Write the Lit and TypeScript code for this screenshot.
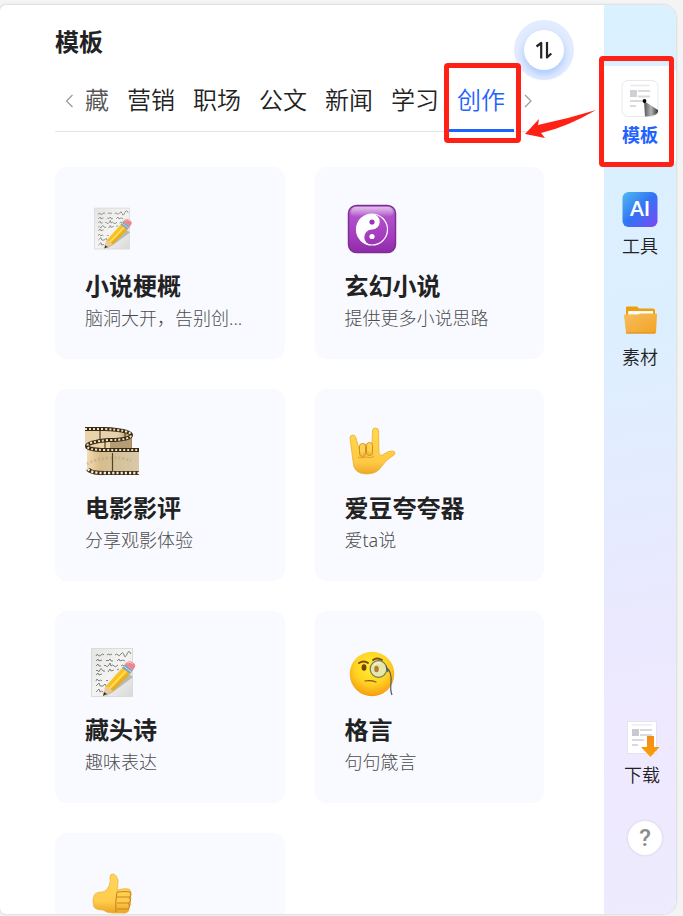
import { LitElement, html, css, nothing, TemplateResult } from "lit";
import { customElement, state } from "lit/decorators.js";
import { classMap } from "lit/directives/class-map.js";

const memo = html`<svg viewBox="0 0 54 54" aria-hidden="true">
  <defs>
    <linearGradient id="memo-paper" x1="0" y1="0" x2="1" y2="1"><stop stop-color="#e4e4e2" /><stop offset=".5" stop-color="#f4f4f2" /><stop offset="1" stop-color="#d9d9d9" /></linearGradient>
    <linearGradient id="memo-pencil" x1="0" y1="0" x2="1" y2="1"><stop stop-color="#ffe04a" /><stop offset=".5" stop-color="#f6bd1c" /><stop offset="1" stop-color="#b97708" /></linearGradient>
  </defs>
  <rect x="6.500" y="2.500" width="41" height="48" fill="url(#memo-paper)" stroke="#d9dbdd" />
  <g fill="none" stroke="#666" stroke-width=".8">
    <path d="M11 10q1-3 2-1t3 0 3 0m3 0q1-2 3 0l2-1m3 1q2-2 3 0t3-1 3 1 3-1 4 0" />
    <path d="M11 15l2-2 1 2 3-1m4 1q1-2 2 0l2-2 1 2h2m4 0l2-2 1 2 3-1 2 1" />
    <path d="M11 20l2-2 1 2h2m3 0q1-2 2 0t3-1l1-2 1 3q2-2 3 0t4-1m3 1q1-2 3 0" />
    <path d="M11 25q1-2 2 0t2-1 3 1h2m3 1l2-3 1 2 3-1m3 0l2-1" />
    <path d="M11 29l2-2 1 2 3-1m-6 7l1-2 2 2q2-2 3 0m4 0q1-2 2 0" />
    <path d="M11 40l3-3 1 3h3l2-2 1 2m-10 6l3-3 1 3q2-2 3 0" />
  </g>
  <path d="M20 47l20-22 8 6-20 15-7 4z" fill="#000" opacity=".2" />
  <path d="M20 41L37 22l8 6-17 17z" fill="url(#memo-pencil)" />
  <path d="M24 43l17-18" stroke="#ffde55" stroke-width="2" />
  <path d="M20 41l-2 9 10-5-3-2-1-2z" fill="#edc993" />
  <path d="M19 46l-1 4 4-2z" fill="#38312c" />
  <path d="M37 22l3-4 8 6-3 4z" fill="#8ba0b3" /><path d="M38.500 20l8 6" stroke="#cedbe5" />
  <path d="M40 18q3-4 7-2 4 2 3 5l-2 3z" fill="#ed858d" /><path d="M42 17q3-2 6 1" stroke="#ffc0c2" fill="none" />
</svg>`;

const yinYang = html`<svg viewBox="0 0 54 54" aria-hidden="true">
  <defs>
    <linearGradient id="yy-bg" x2="0" y2="1"><stop stop-color="#c58ad5" /><stop offset=".22" stop-color="#b052cb" /><stop offset=".7" stop-color="#a33abd" /><stop offset="1" stop-color="#8d2ba8" /></linearGradient>
    <linearGradient id="yy-shine" x2="0" y2="1"><stop stop-color="#fff" stop-opacity=".5" /><stop offset="1" stop-color="#fff" stop-opacity="0" /></linearGradient>
  </defs>
  <rect x="3.500" y="3.500" width="47" height="47" rx="8" fill="url(#yy-bg)" stroke="#7d2f94" stroke-width="1.500" />
  <rect x="6" y="5" width="42" height="10" rx="5" fill="url(#yy-shine)" />
  <circle cx="27" cy="27.500" r="15.500" fill="none" stroke="#fff" stroke-width="1.200" />
  <path d="M27 12a15.500 15.500 0 0 0 0 31a7.750 7.750 0 0 1 0-15.500a7.750 7.750 0 0 0 0-15.500z" fill="#fff" />
  <circle cx="27" cy="20" r="2.600" fill="#9b35b7" /><circle cx="27" cy="34.500" r="2.600" fill="#fff" />
</svg>`;

const film = html`<svg viewBox="0 0 54 54" aria-hidden="true">
  <defs>
    <linearGradient id="film-front"><stop stop-color="#f2dcb4" /><stop offset=".25" stop-color="#d9bd8b" /><stop offset=".5" stop-color="#d4c099" /><stop offset="1" stop-color="#d9c9a8" /></linearGradient>
    <linearGradient id="film-back"><stop stop-color="#ead3aa" /><stop offset=".7" stop-color="#e6d1ad" /><stop offset="1" stop-color="#a98447" /></linearGradient>
  </defs>
  <g transform="translate(0 2)">
    <path d="M0 3h20q27 1 27 8v24q-4 4-15 4H4V21L0 23z" fill="url(#film-back)" />
    <path d="M2 20q4-6 24-7 18-1 20-4v25q-10-6-25-4-17 1-19 5z" fill="#b49d74" />
    <path d="M2 20q6-5 23-7v10z" fill="#ead5a9" />
    <path d="M2 21q4 4 18 4h34v24H22Q5 50 2 45z" fill="url(#film-front)" />
    <path d="M2 38q8-5 22-6 15-1 22 3" fill="none" stroke="#b9a47d" stroke-width="3" stroke-dasharray="2 2" opacity=".5" />
    <path d="M15 5v8M40 7v5M20 15v8M27.500 27v20" stroke="#56421d" stroke-width="1.200" />
    <g fill="none">
      <path d="M0 3h19q27 1 27 6T24 14Q2 16 2 20t18 4h34" stroke="#392b16" stroke-width="4" />
      <path d="M0 3h19q27 1 27 6T24 14Q2 16 2 20t18 4h34" stroke="#f0e2c4" stroke-width="2" stroke-dasharray="2 2" />
      <path d="M3 43q2 4 17 4h34" stroke="#392b16" stroke-width="4" />
      <path d="M3 43q2 4 17 4h34" stroke="#f8edda" stroke-width="2.400" stroke-dasharray="2.200 2" />
    </g>
  </g>
</svg>`;

const loveHand = html`<svg viewBox="0 0 54 54" aria-hidden="true">
  <defs><linearGradient id="hand-skin" x2="0" y2="1"><stop stop-color="#ffda4c" /><stop offset=".75" stop-color="#ffc944" /><stop offset="1" stop-color="#eba72a" /></linearGradient></defs>
  <g transform="translate(0 4)">
    <path d="M5 10q0-3 3-3 2 0 3 3l3 11q0-5 5-5 3 0 4 2 1-2 4-2L27.500 3q0-3 3-3t3 3l.500 22q1 4 5 1 4-3 8-3 3 0 3 2t-4 4q-5 3-9 9-5 8-15 8Q8 46 8 33z" fill="url(#hand-skin)" stroke="#efac2c" stroke-width=".8" />
    <g fill="#f6bf3c" stroke="#c98a20" stroke-width=".9"><rect x="14.500" y="15.500" width="6" height="13" rx="3" /><rect x="21.500" y="14.500" width="6" height="13" rx="3" /></g>
    <g fill="#ffd052"><rect x="15" y="16" width="5" height="9" rx="2.500" /><rect x="22" y="15" width="5" height="9" rx="2.500" /></g>
    <path d="M13 29q3 2 8 0 5 2 8-1" fill="none" stroke="#e2a22c" />
  </g>
</svg>`;

const monocle = html`<svg viewBox="0 0 54 54" aria-hidden="true">
  <defs><radialGradient id="face-skin" cy=".35" r=".68"><stop stop-color="#fff02e" /><stop offset=".55" stop-color="#ffd323" /><stop offset=".9" stop-color="#f8a413" /><stop offset="1" stop-color="#e98a12" /></radialGradient></defs>
  <circle cx="27" cy="28" r="22.300" fill="url(#face-skin)" />
  <path d="M14 17q5-3 9 0" fill="none" stroke="#78461a" stroke-width="1.800" stroke-linecap="round" />
  <path d="M28 14q4-3 9 0" fill="none" stroke="#78461a" stroke-width="1.800" stroke-linecap="round" />
  <ellipse cx="19" cy="21.500" rx="2.400" ry="3.300" fill="#70430d" />
  <circle cx="33.500" cy="23" r="8.300" fill="#e9e7a5" stroke="#6f746e" stroke-width="1.200" />
  <ellipse cx="31.500" cy="23" rx="2.300" ry="3.300" fill="#aa8137" />
  <path d="M29 19q3-4 7-2" stroke="#fff" fill="none" opacity=".8" />
  <path d="M42 22q5 4 4 15-1 7 1 12M41 20l2 6" fill="none" stroke="#555b60" stroke-width="1.200" />
  <path d="M20 35q6-1 11 1" fill="none" stroke="#8d5316" stroke-width="1.200" stroke-linecap="round" />
</svg>`;

const thumb = html`<svg viewBox="0 0 54 54" aria-hidden="true">
  <defs><linearGradient id="thumb-skin" x2="0" y2="1"><stop stop-color="#ffd75b" /><stop offset=".7" stop-color="#ffcc4b" /><stop offset="1" stop-color="#e9a326" /></linearGradient></defs>
  <g transform="translate(0 1)">
    <path d="M9 27q1-4 9-4 3 0 6-6 2-4 1-9 0-3 3-3 4 1 5 7 0 4-1 9 8-2 12-1 3 2 1 6 2 3 0 6 2 4-1 6 1 7-7 6H28q-6 0-10-3-7 0-9-3-2-6 0-11z" fill="url(#thumb-skin)" stroke="#efb032" stroke-width=".8" />
    <path d="M32 23q9-1 13 0 2 2 0 5H32m1 0h11q3 3 0 6H32m1 0h10q3 3 0 6H32m0-17q-2 10-1 20" fill="none" stroke="#cb8420" stroke-width="1.100" />
  </g>
</svg>`;

const templateIcon = html`<svg viewBox="0 0 38 38" aria-hidden="true">
  <defs><linearGradient id="pen-body"><stop stop-color="#555" /><stop offset=".5" stop-color="#b5b5b5" /><stop offset="1" stop-color="#333" /></linearGradient></defs>
  <rect x="1" y="1.500" width="36" height="36" rx="6" fill="#fff" stroke="#e9e9ec" />
  <path d="M9 6.500h20" stroke="#e8e8ea" stroke-width="1.500" /><path d="M9 11h7v7H9z" fill="#cfd0d5" />
  <path d="M17 12h12M17 17.500h12M9 22h14M9 27h6" stroke="#d9dade" stroke-width="2" />
  <path d="M23 22l14 9q1 6-13 6.500z" fill="url(#pen-body)" /><circle cx="23.500" cy="22" r="1.900" fill="#050505" />
</svg>`;

const aiIcon = html`<svg viewBox="0 0 38 38" aria-hidden="true">
  <defs><linearGradient id="ai-bg" x2="1" y2="1"><stop stop-color="#50baf2" /><stop offset=".5" stop-color="#3273f5" /><stop offset="1" stop-color="#7d46f3" /></linearGradient></defs>
  <rect x="1.500" y="2" width="35" height="35" rx="6" fill="url(#ai-bg)" />
  <text class="ai-text" x="19" y="26" text-anchor="middle">AI</text>
</svg>`;

const folderIcon = html`<svg viewBox="0 0 38 38" aria-hidden="true">
  <defs><linearGradient id="folder-front" x2="1" y2="1"><stop stop-color="#f6be60" /><stop offset="1" stop-color="#f3a321" /></linearGradient></defs>
  <path d="M5 6.500q0-1 1-1h10l2 2h14q2 0 2 2V30H5z" fill="#eaa10d" />
  <path d="M7 11q0-1 1-1h24v8H7z" fill="#f4efe7" /><path d="M8 11.500h24" stroke="#fff" stroke-width="2" />
  <path d="M3 14.500q0-1 1-1h13l3-1h14q2 0 2 1l-1 18q0 1-1 1H6q-1 0-1-1z" fill="url(#folder-front)" /><path d="M5 32h29" stroke="#dd8d16" />
</svg>`;

const downloadIcon = html`<svg viewBox="0 0 38 38" aria-hidden="true">
  <defs><linearGradient id="down-arrow" x2="0" y2="1"><stop stop-color="#f28b1a" /><stop offset="1" stop-color="#ff9d06" /></linearGradient></defs>
  <path d="M4.500 2.500h29v32h-29z" fill="#fff" stroke="#e4e2eb" />
  <path d="M9 6h20" stroke="#e3e4e8" /><path d="M9 10h7v7H9z" fill="#c9cad1" />
  <path d="M17 11h12M17 16h12M9 21h12M9 26h6" stroke="#d8dadf" stroke-width="2" />
  <path d="M24 17h7v11h5.500L27.500 38l-9.500-10h6z" fill="url(#down-arrow)" />
</svg>`;

interface Card { icon: TemplateResult; small?: boolean; title?: string; text?: string }
const CARDS: Card[] = [
  { icon: memo, small: true, title: "小说梗概", text: "脑洞大开，告别创..." },
  { icon: yinYang, title: "玄幻小说", text: "提供更多小说思路" },
  { icon: film, title: "电影影评", text: "分享观影体验" },
  { icon: loveHand, title: "爱豆夸夸器", text: "爱ta说" },
  { icon: memo, title: "藏头诗", text: "趣味表达" },
  { icon: monocle, title: "格言", text: "句句箴言" },
  { icon: thumb },
];
const TABS = ["藏", "营销", "职场", "公文", "新闻", "学习", "创作"];

@customElement("app-root")
export class AppRoot extends LitElement {
  @state() private tab = "创作";

  static styles = css`
    :host {
      display: block;
      box-sizing: border-box;
      height: 100vh;
      padding: 5px 7px 2px 0;
      overflow: hidden;
      background: #f4f4f4;
      color: #222;
      font-family: "Noto Sans", "Noto Sans CJK SC", sans-serif;
    }
    * { box-sizing: border-box; }
    button { font: inherit; color: inherit; background: none; border: 0; padding: 0; margin: 0; cursor: pointer; }
    svg { display: block; overflow: visible; }
    h1, h2, p { margin: 0; }
    .window {
      display: flex;
      height: 100%;
      background: #fff;
      border-radius: 6px 14px 14px 6px;
      box-shadow: 0 0 2px 1px #dcdcdc;
    }
    .main { flex: 1; min-width: 0; overflow: hidden; padding: 15px 60px 0 55px; border-radius: 6px 0 0 6px; }
    .header { display: flex; justify-content: space-between; margin-right: -30px; }
    h1 { font-size: 24px; line-height: 36px; font-weight: 700; margin-top: 4px; }
    .halo { display: grid; place-items: center; width: 60px; height: 60px; border-radius: 50%; background: #e3ecff; }
    .sort { display: grid; place-items: center; width: 40px; height: 40px; border-radius: 50%; background: #fff; box-shadow: 0 4px 8px #a4c5ff; }
    .sort svg { width: 18px; height: 18px; }
    .tabs { display: flex; box-shadow: inset 0 -1px #e4e4e6; }
    .arrow { flex: none; width: 21px; height: 42px; display: grid; place-items: center; padding-left: 7px; }
    .arrow svg { width: 8px; height: 14px; }
    .tab {
      position: relative;
      flex: none;
      height: 52px;
      padding: 0 9px 9px;
      border-bottom: 3px solid transparent;
      font-size: 24px;
      line-height: 40px;
      font-weight: 350;
    }
    .tab.faded { color: #555; }
    .tab.active { color: #1f63ff; border-color: #1f63ff; }
    .mark { position: absolute; border: 5px solid #ff2116; border-radius: 4px; pointer-events: none; }
    .tab-mark { inset: -17px -7px -14px -4px; }
    .side-mark { inset: -10px 2px 0 -5px; }
    .pointer { position: absolute; left: 77px; top: 28px; width: 72px; height: 30px; pointer-events: none; }
    .cards { display: grid; grid-template-columns: 1fr 1fr; gap: 30px; margin-top: 35px; }
    .card { display: flex; flex-direction: column; min-width: 0; height: 192px; padding: 35px 30px 26px; border-radius: 12px; background: #f9faff; text-align: left; }
    .picture { display: grid; place-items: center; width: 54px; height: 54px; margin-bottom: 12px; }
    .picture svg { width: 54px; height: 54px; }
    .picture.small svg { width: 46px; height: 46px; }
    h2 { font-size: 24px; line-height: 36px; font-weight: 700; white-space: nowrap; }
    .card p { font-size: 18px; line-height: 28px; font-weight: 300; color: #4c4c4c; white-space: nowrap; }
    .side {
      flex: none;
      display: flex;
      flex-direction: column;
      gap: 10px;
      width: 72px;
      padding: 61px 0 59px;
      border-radius: 0 14px 14px 0;
      background: linear-gradient(170deg, #daf1ff 0%, #dceffe 35%, #e9e9fe 65%, #efe9ff 80%, #eeebfe 100%);
    }
    .item { position: relative; display: flex; flex-direction: column; align-items: center; width: 100%; height: 101px; padding-top: 13px; font-size: 18px; line-height: 28px; font-weight: 350; }
    .item svg { width: 38px; height: 38px; margin-bottom: 4px; }
    .item.current { background: #fff; border-radius: 0 8px 8px 0; color: #1f63ff; font-weight: 700; }
    .bottom { display: flex; flex-direction: column; gap: 14px; margin-top: auto; padding-left: 4px; }
    .help { align-self: flex-end; width: 34px; height: 34px; margin-right: 14px; border-radius: 50%; background: #fff; box-shadow: 0 0 3px #cfcbdc; color: #8c8c8c; font-family: Roboto, sans-serif; font-size: 24px; line-height: 34px; font-weight: 500; }
    .ai-text { font: 700 20px Lato, sans-serif; fill: #fff; }
  `;

  private renderTab(name: string) {
    const active = name === this.tab;
    return html`<button
      role="tab"
      aria-selected=${active}
      class=${classMap({ tab: true, active, faded: name === "藏" && !active })}
      @click=${() => (this.tab = name)}
    >${name}${name === "创作"
      ? html`<span class="mark tab-mark"></span>
          <svg class="pointer" viewBox="0 0 72 30" aria-hidden="true"><path d="M0 26L14 11l-1 6Q42 11 71 2 42 19 16 25l4 5z" fill="#ff2116" /></svg>`
      : nothing}</button>`;
  }

  render() {
    return html`<div class="window">
      <main class="main">
        <header class="header">
          <h1>模板</h1>
          <div class="halo">
            <button class="sort" aria-label="切换排序">
              <svg viewBox="0 0 18 18" aria-hidden="true"><path d="M1.500 5.500L6.200 2v15.500M12 1v15.500l4.300-4" fill="none" stroke="#252525" stroke-width="2.200" stroke-linejoin="round" /></svg>
            </button>
          </div>
        </header>
        <div class="tabs" role="tablist">
          <button class="arrow" aria-label="上一组">
            <svg viewBox="0 0 8 14" aria-hidden="true"><path d="M7.500 1L1.500 7l6 6" fill="none" stroke="#999" stroke-width="1.200" /></svg>
          </button>
          ${TABS.map((name) => this.renderTab(name))}
          <button class="arrow" aria-label="下一组">
            <svg viewBox="0 0 8 14" aria-hidden="true"><path d="M1 1l6 6-6 6" fill="none" stroke="#999" stroke-width="1.200" /></svg>
          </button>
        </div>
        <section class="cards">
          ${CARDS.map((card) => html`<button class="card">
            <div class=${classMap({ picture: true, small: !!card.small })}>${card.icon}</div>
            ${card.title ? html`<h2>${card.title}</h2>` : nothing}
            ${card.text ? html`<p>${card.text}</p>` : nothing}
          </button>`)}
        </section>
      </main>
      <nav class="side">
        <button class="item current">${templateIcon}模板<span class="mark side-mark"></span></button>
        <button class="item">${aiIcon}工具</button>
        <button class="item">${folderIcon}素材</button>
        <div class="bottom">
          <button class="item">${downloadIcon}下载</button>
          <button class="help" aria-label="帮助">?</button>
        </div>
      </nav>
    </div>`;
  }
}
